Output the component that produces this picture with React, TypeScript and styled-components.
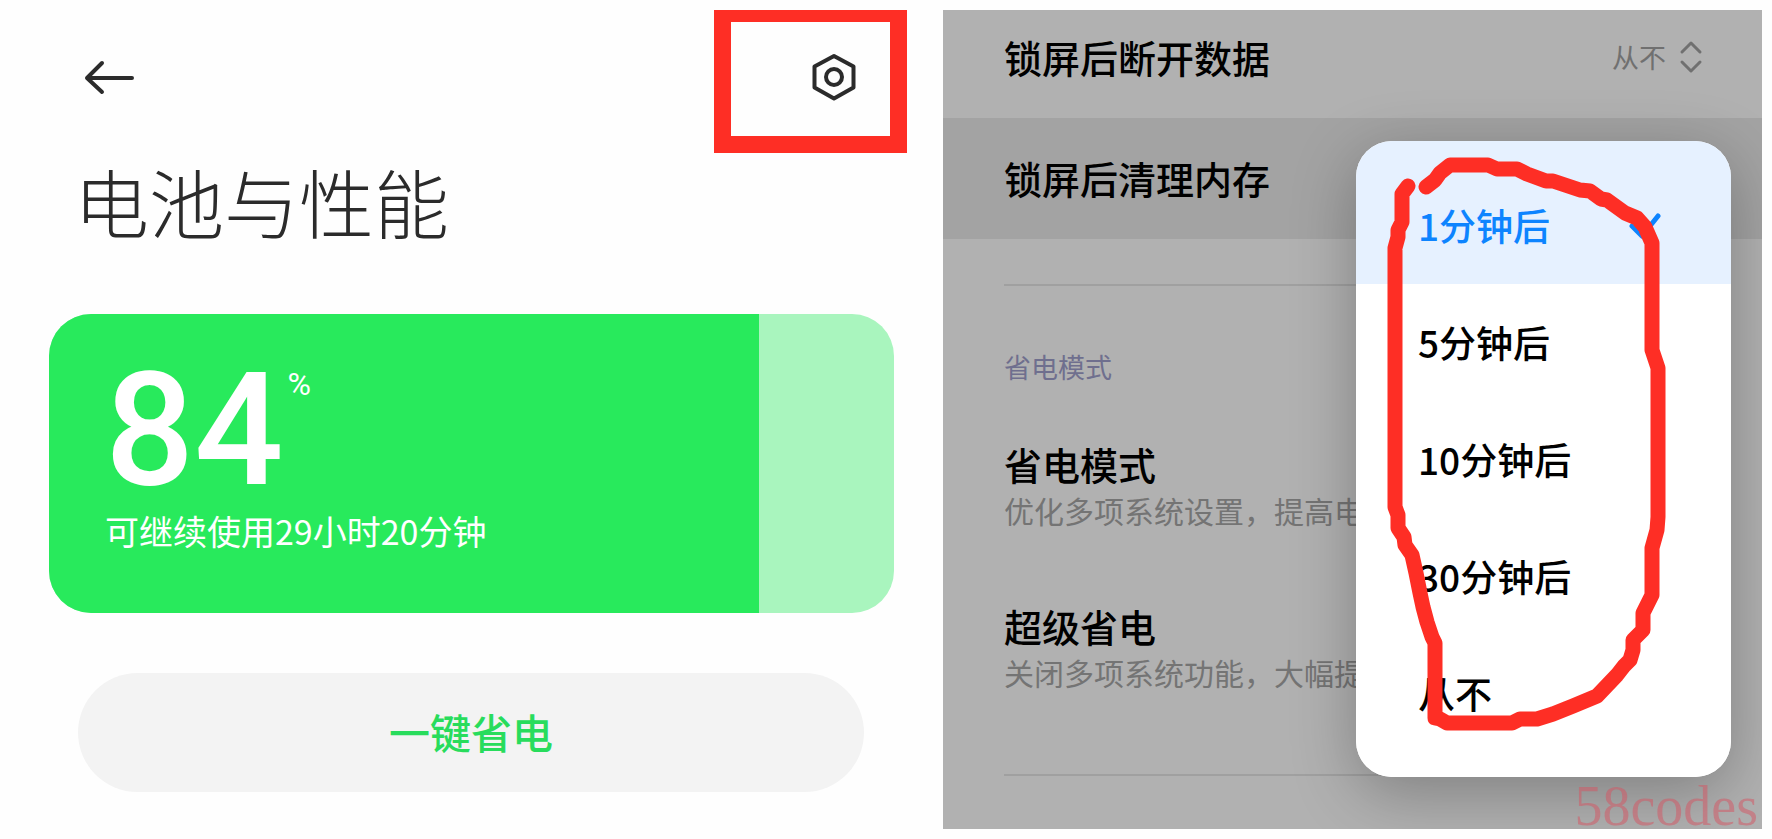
import React, { useState } from "react";
import styled, { createGlobalStyle } from "styled-components";

const GlobalStyle = createGlobalStyle`
  *, *::before, *::after { box-sizing: border-box; }
  body {
    margin: 0;
    background: #fefefe;
    color: #000;
    font-family: "Noto Sans CJK SC", "Noto Sans", sans-serif;
  }
  h1, h2, p, ul { margin: 0; padding: 0; }
  button { margin: 0; padding: 0; border: 0; background: none; font: inherit; color: inherit; cursor: pointer; }
`;

const Page = styled.main`
  position: relative;
  display: grid;
  grid-template-columns: 933fr 819fr;
  min-height: 100vh;
  padding: 10px;
`;

const BatteryScreen = styled.section`
  display: flex;
  flex-direction: column;
`;

const Header = styled.header`
  display: flex;
  justify-content: space-between;
  align-items: flex-start;
  padding: 0 36px 0 72px;
`;

const IconButton = styled.button`
  display: flex;
  width: 56px;
  height: 48px;
  align-items: center;
  justify-content: center;
`;

const BackButton = styled(IconButton)`
  margin-top: 43px;
`;

const Highlight = styled.div`
  display: flex;
  justify-content: flex-end;
  width: 193px;
  height: 143px;
  padding: 31px 28px 0 0;
  border: 17px solid #fe2e25;
  border-top-width: 12px;
`;

const Title = styled.h1`
  margin: 3px 0 0 64px;
  font-size: 75px;
  line-height: 90px;
  font-weight: 300;
  color: #2b2b2b;
`;

const BatteryCard = styled.div`
  position: relative;
  overflow: hidden;
  margin: 68px 49px 0 39px;
  padding: 56px 56px 57px;
  border-radius: 42px;
  background: #a9f5be;
  color: #fff;
`;

const BatteryFill = styled.div`
  position: absolute;
  inset: 0 auto 0 0;
  background: #28ea5c;
`;

const Level = styled.div`
  position: relative;
  display: flex;
  align-items: flex-start;
  gap: 4px;
  font-family: Roboto, sans-serif;
`;

const LevelNumber = styled.span`
  font-size: 157px;
  line-height: 120px;
  font-weight: 500;
`;

const LevelUnit = styled.span`
  font-size: 32px;
  line-height: 28px;
`;

const Remaining = styled.p`
  position: relative;
  margin-top: 16px;
  font-size: 34px;
  line-height: 50px;
`;

const SaveButton = styled.button`
  height: 119px;
  margin: 60px 79px 0 68px;
  padding-bottom: 4px;
  border-radius: 60px;
  background: #f3f3f3;
  color: #28dc5c;
  font-size: 41px;
  font-weight: 500;
`;

const SettingsScreen = styled.section`
  position: relative;
  overflow: hidden;
  background: #b1b1b1;
`;

const SettingRow = styled.div<{ $active?: boolean; $first?: boolean }>`
  display: flex;
  align-items: center;
  justify-content: space-between;
  padding: ${(p) => (p.$first ? "23px" : "36px")} 59px 38px 61px;
  background: ${(p) => (p.$active ? "#a3a3a3" : "transparent")};
`;

const RowLabel = styled.label`
  font-size: 38px;
  line-height: 47px;
  font-weight: 500;
`;

const SelectWrap = styled.span`
  display: flex;
  align-items: center;
  gap: 11px;
  color: #707070;
`;

const RowSelect = styled.select`
  appearance: none;
  width: 56px;
  padding: 0;
  border: 0;
  background: none;
  color: inherit;
  font: inherit;
  font-size: 27px;
  line-height: 40px;
`;

const Divider = styled.hr<{ $gap: number }>`
  height: 2px;
  margin: ${(p) => p.$gap}px 60px 0 61px;
  border: 0;
  background: #a0a0a0;
`;

const Category = styled.h2`
  margin: 61px 0 53px 61px;
  font-size: 27px;
  line-height: 40px;
  font-weight: 400;
  color: #6f6f8e;
`;

const Items = styled.div`
  display: flex;
  flex-direction: column;
  gap: 72px;
`;

const Item = styled.button`
  display: flex;
  flex-direction: column;
  gap: 2px;
  padding-left: 61px;
  text-align: left;
  white-space: nowrap;
`;

const ItemTitle = styled.span`
  font-size: 38px;
  line-height: 48px;
  font-weight: 500;
`;

const ItemDetail = styled.span`
  font-size: 30px;
  line-height: 40px;
  color: #747474;
`;

const Popup = styled.div`
  position: absolute;
  top: 131px;
  right: 31px;
  width: 375px;
  border-radius: 36px;
  background: #fff;
  box-shadow: 0 16px 64px rgba(0, 0, 0, 0.28);
`;

const OptionList = styled.ul`
  overflow: hidden;
  border-radius: 36px;
  list-style: none;
`;

const Option = styled.button<{ $selected: boolean }>`
  display: flex;
  align-items: center;
  justify-content: space-between;
  width: 100%;
  min-height: 117px;
  padding: 0 70px 2px 62px;
  font-size: 37px;
  line-height: 48px;
  font-weight: 500;
  color: ${(p) => (p.$selected ? "#0d84ff" : "#000")};
  background: ${(p) => (p.$selected ? "#e6f1ff" : "#fff")};

  li:first-child > & {
    min-height: 143px;
    padding-top: 26px;
  }
  li:last-child > & {
    min-height: 142px;
    padding-bottom: 27px;
  }
`;

const Scribble = styled.svg`
  position: absolute;
  top: 0;
  left: 0;
  pointer-events: none;
`;

const Watermark = styled.span`
  position: absolute;
  right: 14px;
  bottom: 1px;
  font-family: "Liberation Serif", serif;
  font-size: 56px;
  line-height: 63px;
  color: rgba(214, 84, 98, 0.5);
`;

const delays = ["1分钟后", "5分钟后", "10分钟后", "30分钟后", "从不"];

const modes = [
  { title: "省电模式", detail: "优化多项系统设置，提高电" },
  { title: "超级省电", detail: "关闭多项系统功能，大幅提" },
];

const scribblePath =
  "M52 45L46 53L46 81L42 89L42 96L39 107L39 366L42 374L42 387L48 396L49 404L56 414L60 432L64 452L67 466L71 481L76 496L79 502L79 577L84 578L91 582L156 582L164 578L181 578L197 573L217 565L241 555L261 534L268 525L274 519L277 509L277 499L287 489L287 472L296 454L296 407L301 389L302 376L302 227L296 209L296 102L289 86L281 77L269 72L251 59L245 58L234 50L224 49L197 40L190 40L171 33L161 28L141 28L132 24L94 24L84 32L79 39L70 46";

export default function App() {
  const level = 84;
  const [delay, setDelay] = useState(delays[0]);

  return (
    <>
      <GlobalStyle />
      <Page>
        <BatteryScreen>
          <Header>
            <BackButton aria-label="返回">
              <svg width="56" height="48" viewBox="0 0 56 48" fill="none" stroke="#2b2b2b" strokeWidth="4" strokeLinecap="round" strokeLinejoin="round">
                <path d="M50 25H6M20 10L5 25L20 39" />
              </svg>
            </BackButton>
            <Highlight>
              <IconButton aria-label="设置">
                <svg width="48" height="48" viewBox="0 0 48 48" fill="none" stroke="#2b2b2b" strokeWidth="4" strokeLinejoin="round">
                  <path d="M24 3L43.500 13.500V34.500L24 45.500L4.500 34.500V13.500Z" />
                  <circle cx="24" cy="24" r="8" />
                </svg>
              </IconButton>
            </Highlight>
          </Header>
          <Title>电池与性能</Title>
          <BatteryCard>
            <BatteryFill style={{ width: `${level}%` }} />
            <Level>
              <LevelNumber>{level}</LevelNumber>
              <LevelUnit>%</LevelUnit>
            </Level>
            <Remaining>可继续使用29小时20分钟</Remaining>
          </BatteryCard>
          <SaveButton>一键省电</SaveButton>
        </BatteryScreen>

        <SettingsScreen>
          <SettingRow $first>
            <RowLabel htmlFor="data-off">锁屏后断开数据</RowLabel>
            <SelectWrap>
              <RowSelect id="data-off" defaultValue="从不">
                {delays.map((d) => (
                  <option key={d}>{d}</option>
                ))}
              </RowSelect>
              <svg width="24" height="34" viewBox="0 0 24 34" fill="none" stroke="currentColor" strokeWidth="3" strokeLinecap="round" strokeLinejoin="round">
                <path d="M3 12L12 3L21 12M3 22L12 31L21 22" />
              </svg>
            </SelectWrap>
          </SettingRow>
          <SettingRow $active>
            <RowLabel as="span" id="clear-memory">锁屏后清理内存</RowLabel>
          </SettingRow>
          <Divider $gap={45} />
          <Category>省电模式</Category>
          <Items>
            {modes.map((m) => (
              <Item key={m.title}>
                <ItemTitle>{m.title}</ItemTitle>
                <ItemDetail>{m.detail}</ItemDetail>
              </Item>
            ))}
          </Items>
          <Divider $gap={82} />

          <Popup>
            <OptionList aria-labelledby="clear-memory">
              {delays.map((d) => (
                <li key={d}>
                  <Option $selected={d === delay} aria-pressed={d === delay} onClick={() => setDelay(d)}>
                    {d}
                    {d === delay && (
                      <svg width="32" height="28" viewBox="0 0 32 28" fill="none" stroke="currentColor" strokeWidth="5" strokeLinecap="round" strokeLinejoin="round">
                        <path d="M3 15L13 25L29 5" />
                      </svg>
                    )}
                  </Option>
                </li>
              ))}
            </OptionList>
            <Scribble width="375" height="635" viewBox="0 0 375 635" fill="none" stroke="#fe2e25" strokeWidth="15" strokeLinecap="round" strokeLinejoin="round" aria-hidden="true">
              <path d={scribblePath} />
            </Scribble>
          </Popup>
        </SettingsScreen>
        <Watermark>58codes</Watermark>
      </Page>
    </>
  );
}
